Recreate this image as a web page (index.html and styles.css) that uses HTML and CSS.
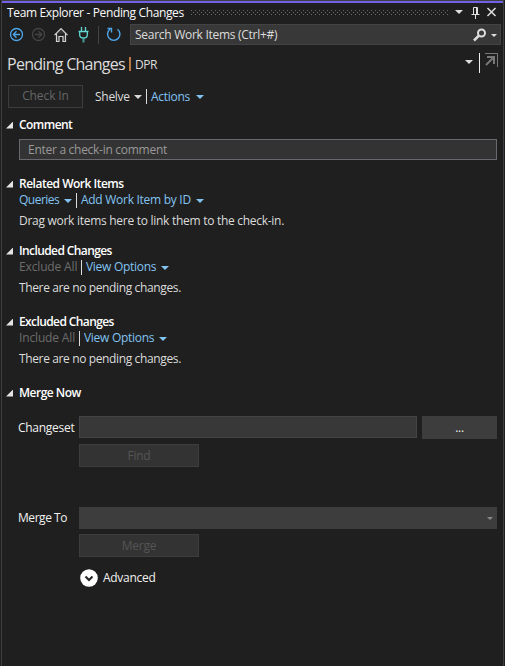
FILE: index.html
```html
<!DOCTYPE html>
<html lang="en">
<head>
<meta charset="utf-8">
<title>Team Explorer</title>
<link rel="stylesheet" href="styles.css">
</head>
<body>
<main class="window">
  <header class="titlebar">
    <span class="caption">Team Explorer - Pending Changes</span>
    <svg class="grip" width="257" height="5"><defs><pattern id="dots" width="4" height="4" patternUnits="userSpaceOnUse"><path fill="#6a6a6a" d="M0 0h1v1H0zM2 2h1v1H2z"/></pattern></defs><path fill="url(#dots)" d="M0 0h257v5H0z"/></svg>
    <svg class="title-icons" width="44" height="16" fill="none" stroke="#e0e0e0"><path fill="#e0e0e0" stroke="none" d="M0 6h8l-4 4z"/><path d="M18.500 10V3.500h4V10M16.500 10.500h8M20.500 11v4M21.500 4v6"/><path stroke-width="1.500" d="M32.500 4l8 8M40.500 4l-8 8"/></svg>
  </header>
  <div class="toolbar">
    <svg class="nav-icons" width="114" height="20" fill="none"><g stroke="#4ea6ea" stroke-width="1.300"><circle cx="7.500" cy="10.500" r="6"/><path d="M11 10.500H4.500M7.500 7.300l-3.200 3.200 3.200 3.200"/></g><g stroke="#444" stroke-width="1.300"><circle cx="29.500" cy="10.500" r="6"/><path d="M26 10.500h6.500M29.500 7.300l3.200 3.200-3.200 3.200"/></g><path fill="#363636" stroke="#d4d4d4" stroke-width="1.200" d="M45.500 11.200L52 4.700l6.500 6.500M47.500 9.700v7.800H50v-5h4v5h2.500V9.700"/><g stroke="#63d8d2" stroke-width="1.300"><path d="M72.500 3v4M76.500 3v4M69.500 7.500h10M70.700 8v3q0 3 3.800 3t3.800-3V8"/><path stroke-width="2" stroke="#459b97" d="M74.500 14v4.500"/></g><path stroke="#444" d="M89.500 2v18"/><path stroke="#4ea6ea" stroke-width="1.400" d="M108.500 5.200a6.200 6.200 0 1 1-7.500 0M98.500 4.500h4v4"/></svg>
    <div class="search"><span class="search-text">Search Work Items (Ctrl+#)</span>
      <svg width="28" height="16" fill="none"><circle cx="9.500" cy="6" r="3.500" stroke="#ddd" stroke-width="2"/><path stroke="#ddd" stroke-width="2.500" d="M7 8.500l-5 5"/><path fill="#ddd" d="M19 7h6l-3 3z"/></svg>
    </div>
  </div>
  <div class="page-title">
    <h1>Pending Changes</h1><i class="accent"></i><span class="project">DPR</span>
    <svg class="title-tools" width="34" height="22" fill="none"><path fill="#ddd" d="M0 8h8l-4 4z"/><path stroke="#eee" d="M14.500 1v20"/><path stroke="#777" d="M20 1.500h12.500V15"/><path stroke="#777" stroke-width="2" d="M21 13l8-8M22 5h7v7"/></svg>
  </div>
  <div class="actions"><button class="checkin" disabled><span>Check In</span></button><span class="shelve">Shelve</span><i class="arrow"></i><i class="sep"></i><a class="act">Actions</a><i class="arrow blue"></i></div>

  <section class="comment"><h2 class="h-comment">Comment</h2><div class="comment-box"><span>Enter a check-in comment</span></div></section>

  <section class="related"><h2 class="h-related">Related Work Items</h2>
    <div class="links"><a class="queries">Queries</a><i class="arrow blue"></i><i class="sep"></i><a class="add">Add Work Item by ID</a><i class="arrow blue"></i></div>
    <p class="drag">Drag work items here to link them to the check-in.</p></section>

  <section class="included"><h2 class="h-included">Included Changes</h2>
    <div class="links"><span class="off exclude">Exclude All</span><i class="sep"></i><a class="view">View Options</a><i class="arrow blue"></i></div>
    <p class="none">There are no pending changes.</p></section>

  <section class="excluded"><h2 class="h-excluded">Excluded Changes</h2>
    <div class="links"><span class="off include">Include All</span><i class="sep"></i><a class="view">View Options</a><i class="arrow blue"></i></div>
    <p class="none">There are no pending changes.</p></section>

  <section class="merge"><h2 class="h-merge">Merge Now</h2>
    <div class="form">
      <label class="l-change">Changeset</label><div class="pair"><div class="field"></div><button class="browse">...</button></div>
      <button class="push find" disabled><span>Find</span></button>
      <label class="l-merge">Merge To</label><div class="combo"><i class="small-arrow"></i></div>
      <button class="push" disabled><span>Merge</span></button>
    </div>
    <div class="advanced"><svg width="20" height="20" fill="none"><circle cx="10" cy="10" r="8.800" fill="#fff"/><path stroke="#222" stroke-width="2" d="M6.500 8.500L10 12l3.500-3.500"/></svg><span class="adv">Advanced</span></div>
  </section>
</main>
</body>
</html>
```
FILE: styles.css
```css
* { box-sizing: border-box; }
body { margin: 0; background: #1f1f1f; color: #dcdcdc; font: 12px/16px "Open Sans", "Noto Sans", sans-serif; letter-spacing: -0.28px; }
.window { height: 666px; margin: 0 1px; border: solid #3f3f42; border-width: 1px 1px 0; overflow: hidden; }
h1, h2, p { margin: 0; font-weight: 400; white-space: nowrap; }
span, a, label { white-space: nowrap; }
svg { display: block; flex: none; }
i { flex: none; }
button { font: inherit; letter-spacing: inherit; padding: 0; border: 0; color: #f0f0f0; }
.titlebar { height: 21px; border-top: 2px solid #7160e8; display: flex; align-items: center; padding: 0 4px 0 5px; color: #fafafa; }
.caption { width: 184px; letter-spacing: -0.36px; }
.grip { margin-top: -1px; }
.title-icons { margin-left: 7px; margin-top: -1px; }
.toolbar { display: flex; height: 24px; padding: 2px 2px 0 7px; }
.nav-icons { margin-right: 7px; }
.search { flex: 1; height: 21px; background: #383838; border: 1px solid #434346; display: flex; align-items: center; justify-content: space-between; padding-left: 4px; }
.page-title { height: 36px; display: flex; align-items: center; padding: 0 4px 0 5px; }
h1 { font-size: 16px; line-height: 22px; width: 122px; letter-spacing: -0.72px; }
.accent { width: 2px; height: 14px; background: #b87842; margin-right: 4px; }
.project { flex: 1; letter-spacing: -0.5px; padding-top: 2px; }
.title-tools { margin-top: -2px; }
.actions { height: 27px; display: flex; align-items: center; padding: 1px 0 0 6px; }
.checkin { width: 75px; height: 23px; border: 1px solid #3d3d3d; background: #222; margin-right: 12px; color: #656565; letter-spacing: -0.1px; }
.shelve { width: 39px; padding-top: 1px; }
.act { width: 45px; padding-top: 1px; }
.arrow { width: 0; height: 0; margin-top: 2px; border: 4px solid transparent; border-top-color: #d8d8d8; border-bottom: 0; }
.arrow.blue { border-top-color: #82c4f2; }
.sep { width: 1px; height: 15px; background: #ddd; margin: 0 4px; }
a { color: #82c4f2; }
section { padding: 0 6px 0 17px; }
h2 { color: #fff; font-size: 12px; line-height: 16px; font-weight: 600; display: flex; align-items: center; margin-left: -13px; letter-spacing: -0.5px; }
h2::before { content: ""; width: 7px; height: 7px; margin-right: 6px; background: #e4e4e4; clip-path: polygon(100% 0, 100% 100%, 0 100%); }
.h-comment { letter-spacing: -0.55px; }
.h-included, .h-excluded { letter-spacing: -0.6px; }
.comment { height: 67px; padding-top: 8px; }
.comment-box { height: 21px; margin-top: 6px; border: 1px solid #68686e; background: #333; color: #999; padding-left: 8px; display: flex; align-items: center; }
.related { height: 67px; }
.included, .excluded { height: 71px; }
.links { display: flex; align-items: center; height: 16px; }
.queries { width: 45px; letter-spacing: -0.5px; }
.add { width: 115px; }
.off { color: #6c6c6c; }
.exclude { width: 58px; letter-spacing: -0.15px; }
.include { width: 56px; letter-spacing: -0.15px; }
.view { width: 75px; }
.links + p { margin-top: 5px; }
.none { letter-spacing: -0.37px; }
.form { margin: 15px 0 0 -1px; display: grid; grid-template-columns: 61px 1fr; grid-template-rows: 23px 58px 22px 23px; row-gap: 5px; }
.form label { align-self: center; color: #f0f0f0; }
.l-merge { letter-spacing: -0.45px; }
.pair { display: flex; gap: 5px; }
.field { flex: 1; height: 22px; background: #383838; border: 1px solid #434346; }
.browse { width: 75px; background: #3d3d3d; }
.push { grid-column: 2; width: 120px; border: 1px solid #3d3d3d; background: #333; color: #555; }
.find { height: 23px; }
.combo { background: #3d3d3d; display: flex; align-items: center; justify-content: flex-end; padding-right: 4px; }
.small-arrow { border: 3px solid transparent; border-top-color: #888; border-bottom: 0; }
.advanced { display: flex; align-items: center; margin: 11px 0 0 60px; gap: 4px; color: #f0f0f0; }
```
